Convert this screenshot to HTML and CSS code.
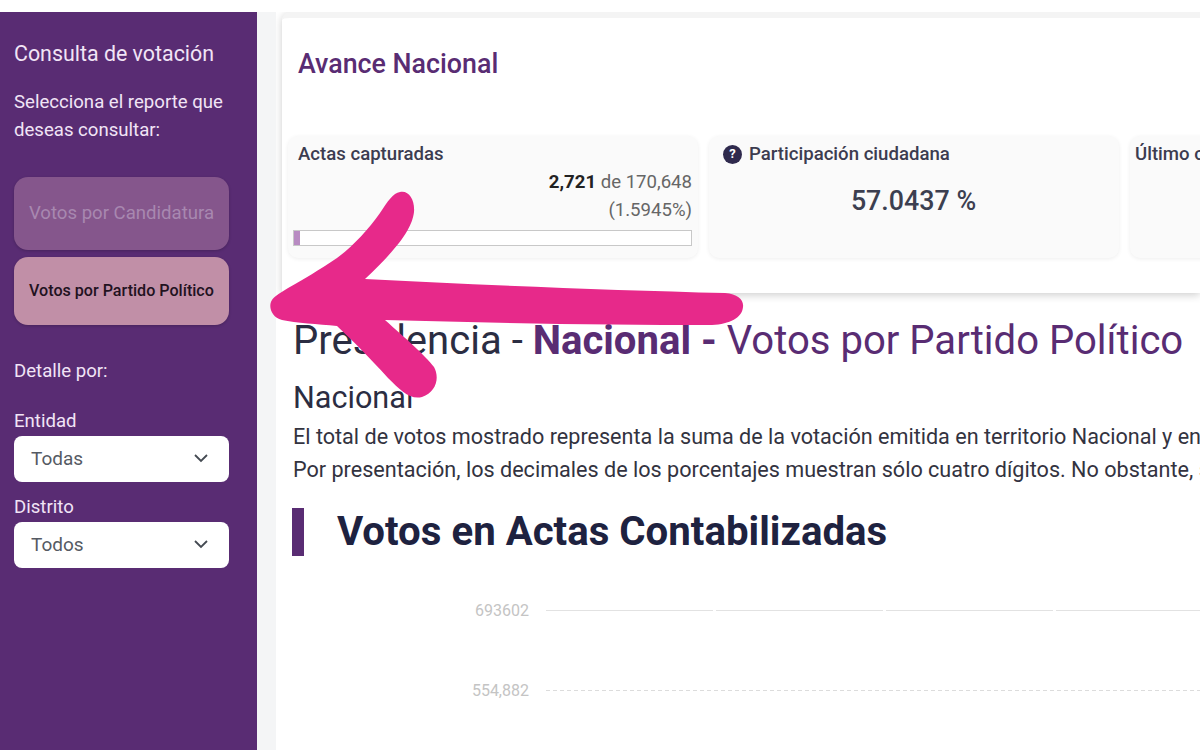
FILE: index.html
```html
<!DOCTYPE html>
<html lang="es">
<head>
  <meta charset="UTF-8">
  <meta name="viewport" content="width=device-width, initial-scale=1.0">
  <title>Consulta de votación</title>
  <link rel="stylesheet" href="styles.css">
</head>
<body>
  <div class="page">
    <aside class="sidebar">
      <h2 class="side-title">Consulta de votación</h2>
      <p class="side-text">Selecciona el reporte que deseas consultar:</p>
      <button class="report-btn disabled">Votos por Candidatura</button>
      <button class="report-btn active">Votos por Partido Político</button>
      <p class="detail-title">Detalle por:</p>
      <label class="field-label">Entidad</label>
      <div class="select-box">
        <span>Todas</span>
        <svg class="chevron" viewBox="0 0 16 16"><path d="M2 5l6 6 6-6"/></svg>
      </div>
      <label class="field-label">Distrito</label>
      <div class="select-box">
        <span>Todos</span>
        <svg class="chevron" viewBox="0 0 16 16"><path d="M2 5l6 6 6-6"/></svg>
      </div>
    </aside>

    <main class="main">
      <section class="avance">
        <h3 class="avance-title">Avance Nacional</h3>
        <div class="stats">
          <div class="stat-card">
            <div class="stat-label">Actas capturadas</div>
            <div class="actas-count"><b>2,721</b> de 170,648</div>
            <div class="actas-count">(1.5945%)</div>
            <div class="progress"><div class="progress-fill" style="width: 1.6%"></div></div>
          </div>
          <div class="stat-card">
            <div class="stat-label with-icon">
              <span class="help-icon">?</span>
              Participación ciudadana
            </div>
            <div class="stat-value">57.0437 %</div>
          </div>
          <div class="stat-card">
            <div class="stat-label last">Último corte</div>
          </div>
        </div>
      </section>

      <div class="content">
        <h1 class="page-title">Presidencia - <b>Nacional -</b> <span>Votos por Partido Político</span></h1>
        <h2 class="sub-title">Nacional</h2>
        <p class="note">El total de votos mostrado representa la suma de la votación emitida en territorio Nacional y en el Extranjero.</p>
        <p class="note">Por presentación, los decimales de los porcentajes muestran sólo cuatro dígitos. No obstante, se consideran todos.</p>
        <h2 class="section-title">Votos en Actas Contabilizadas</h2>
        <div class="chart">
          <div class="chart-row">
            <span class="tick">693602</span>
            <div class="grid-line solid"></div>
          </div>
          <div class="chart-row">
            <span class="tick">554,882</span>
            <div class="grid-line dashed"></div>
          </div>
        </div>
      </div>
    </main>
  </div>

  <svg class="arrow" viewBox="0 0 1200 750">
    <path d="M400 192 C409 190 415 200 414 212 C412 228 400 246 365 279 C480 285 610 290 725 293 C738 294 744 300 743 307 C742 318 730 324 712 325 C610 325 490 323 385 320 C405 338 425 355 434 367 C440 378 436 392 422 397 C410 400 400 390 388 378 C370 358 352 340 337 326 C318 324 296 323 282 320 C271 317 268 306 272 300 C276 293 300 283 337 258 C352 247 368 230 380 213 C388 201 393 193 400 192 Z"/>
  </svg>
</body>
</html>
```

FILE: styles.css
```css
* {
  margin: 0;
  padding: 0;
  box-sizing: border-box;
}

body {
  font-family: Roboto, sans-serif;
  background: white;
  overflow: hidden;
  height: 750px;
}

.page {
  display: flex;
  height: 750px;
  padding-top: 12px;
}

/* Sidebar */
.sidebar {
  width: 257px;
  flex-shrink: 0;
  background: #592c73;
  padding: 30px 28px 0 14px;
  color: #f1e4f6;
}

.side-title {
  font-size: 21.4px;
  font-weight: 400;
  line-height: 24px;
}

.side-text {
  font-size: 18.6px;
  line-height: 28px;
  margin-top: 22px;
  margin-bottom: 33px;
}

.report-btn {
  display: block;
  width: 100%;
  border: none;
  border-radius: 14px;
  font-family: inherit;
  font-size: 18.6px;
  padding-bottom: 2px;
  box-shadow: 0 1px 3px rgba(0,0,0,0.2);
}

.report-btn.disabled {
  height: 73px;
  background: #85568c;
  color: #a888b0;
  margin-bottom: 7px;
}

.report-btn.active {
  height: 68px;
  background: #c18fa7;
  color: #22121f;
  font-size: 16.1px;
  font-weight: 500;
}

.detail-title {
  font-size: 18.6px;
  line-height: 24px;
  margin-top: 34px;
  margin-bottom: 26px;
}

.field-label {
  display: block;
  font-size: 18.6px;
  line-height: 24px;
  margin-bottom: 3px;
}

.select-box {
  display: flex;
  align-items: center;
  justify-content: space-between;
  height: 46px;
  background: white;
  border-radius: 8px;
  padding: 0 20px 2px 17px;
  margin-bottom: 13px;
  font-size: 19px;
  color: #555a63;
}

.chevron {
  width: 16px;
  height: 16px;
  fill: none;
  stroke: #444a52;
  stroke-width: 1.8;
}

/* Main */
.main {
  flex: 1;
  min-width: 0;
  background: white;
  border-left: 19px solid #f4f5f6;
  position: relative;
  overflow: hidden;
}

.avance {
  height: 281px;
  margin-left: 6px;
  padding: 31px 0 0 6px;
  border-top: 6px solid #f4f4f4;
  box-shadow: 0 2px 8px rgba(0,0,0,0.2);
  border-top-left-radius: 8px;
  background: white;
}

.avance-title {
  color: #592c73;
  font-size: 26.8px;
  font-weight: 500;
  line-height: 30px;
  margin-left: 10px;
}

.stats {
  display: flex;
  gap: 11px;
  margin-top: 57px;
  width: 1300px;
}

.stat-card {
  width: 410px;
  height: 122px;
  flex-shrink: 0;
  background: #fafafa;
  border-radius: 10px;
  padding: 8px 6px 0 5px;
  box-shadow: 0 1px 4px rgba(0,0,0,0.07);
}

.stat-label {
  display: flex;
  align-items: center;
  gap: 7px;
  font-size: 18.6px;
  font-weight: 500;
  line-height: 20px;
  color: #3c3c50;
  margin-left: 5px;
  margin-bottom: 4px;
}

.stat-label.with-icon {
  margin-left: 9px;
}

.stat-label.last {
  margin-left: 0;
}

.help-icon {
  display: flex;
  align-items: center;
  justify-content: center;
  width: 19px;
  height: 19px;
  border-radius: 50%;
  background: #2f2a4d;
  color: white;
  font-size: 13px;
  font-weight: 700;
}

.actas-count {
  text-align: right;
  font-size: 18.6px;
  line-height: 28px;
  color: #666;
}

.actas-count b {
  color: #222;
  font-weight: 700;
}

.progress {
  height: 16px;
  border: 1px solid #c8c8c8;
  background: white;
  margin-top: 6px;
}

.progress-fill {
  height: 100%;
  background: #b88bc2;
}

.stat-value {
  text-align: center;
  font-size: 26.8px;
  font-weight: 500;
  color: #3c3f50;
  margin-top: 21px;
}

.content {
  padding: 23px 0 0 17px;
  white-space: nowrap;
}

.page-title {
  font-size: 40.1px;
  font-weight: 400;
  line-height: 50px;
  color: #2b2d42;
}

.page-title b {
  font-weight: 700;
  color: #592c73;
}

.page-title span {
  color: #592c73;
}

.sub-title {
  font-size: 30.6px;
  font-weight: 400;
  color: #2b2d42;
  line-height: 34px;
  margin-top: 15px;
  margin-bottom: 5px;
}

.note {
  font-size: 21.6px;
  line-height: 33px;
  color: #33333f;
}

.section-title {
  font-size: 40.2px;
  font-weight: 700;
  line-height: 48px;
  color: #1e2240;
  border-left: 12px solid #592c73;
  padding-left: 33px;
  margin-top: 22px;
  margin-left: -1px;
}

.chart {
  margin-top: 44px;
}

.chart-row {
  display: flex;
  align-items: center;
  gap: 17px;
  height: 20px;
  margin-bottom: 60px;
}

.tick {
  width: 236px;
  text-align: right;
  font-size: 16px;
  color: #c4c4c4;
}

.grid-line {
  flex: 1;
  height: 1px;
}

.grid-line.solid {
  background: repeating-linear-gradient(to right, #e2e2e2 0 167px, white 167px 170px);
}

.grid-line.dashed {
  background: repeating-linear-gradient(to right, #dcdcdc 0 4px, white 4px 7px);
}

/* Annotation drawn over the page */
.arrow {
  position: absolute;
  top: 0;
  left: 0;
  width: 1200px;
  height: 750px;
  fill: #e7298a;
  pointer-events: none;
}
```
